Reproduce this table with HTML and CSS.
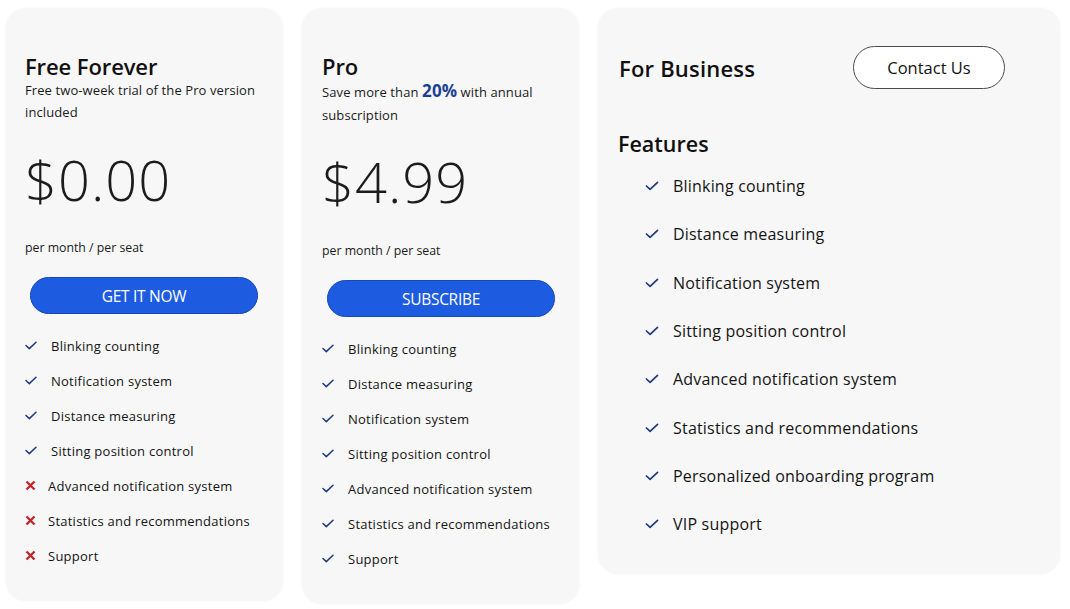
FILE: index.html
```html
<!DOCTYPE html>
<html>
<head>
<meta charset="utf-8">
<link rel="stylesheet" href="styles.css">
</head>
<body>
<div class="plans">
  <section class="card card-free">
    <h2 class="title">Free Forever</h2>
    <p class="sub">Free two-week trial of the Pro version included</p>
    <div class="price">$0.00</div>
    <div class="per">per month / per seat</div>
    <button class="cta">GET IT NOW</button>
    <ul class="feats">
      <li><svg class="ic" viewBox="0 0 12 9"><path d="M1 4.5 L4.3 7.6 L11 1.2"/></svg><span>Blinking counting</span></li>
      <li><svg class="ic" viewBox="0 0 12 9"><path d="M1 4.5 L4.3 7.6 L11 1.2"/></svg><span>Notification system</span></li>
      <li><svg class="ic" viewBox="0 0 12 9"><path d="M1 4.5 L4.3 7.6 L11 1.2"/></svg><span>Distance measuring</span></li>
      <li><svg class="ic" viewBox="0 0 12 9"><path d="M1 4.5 L4.3 7.6 L11 1.2"/></svg><span>Sitting position control</span></li>
      <li class="no"><svg class="x" viewBox="0 0 11 11"><path d="M1.5 1.5 L9.5 9.5 M9.5 1.5 L1.5 9.5"/></svg><span>Advanced notification system</span></li>
      <li class="no"><svg class="x" viewBox="0 0 11 11"><path d="M1.5 1.5 L9.5 9.5 M9.5 1.5 L1.5 9.5"/></svg><span>Statistics and recommendations</span></li>
      <li class="no"><svg class="x" viewBox="0 0 11 11"><path d="M1.5 1.5 L9.5 9.5 M9.5 1.5 L1.5 9.5"/></svg><span>Support</span></li>
    </ul>
  </section>

  <section class="card card-pro">
    <h2 class="title">Pro</h2>
    <p class="sub sub-pro">Save more than <strong class="hl">20%</strong> with annual<br>subscription</p>
    <div class="price">$4.99</div>
    <div class="per">per month / per seat</div>
    <button class="cta">SUBSCRIBE</button>
    <ul class="feats">
      <li><svg class="ic" viewBox="0 0 12 9"><path d="M1 4.5 L4.3 7.6 L11 1.2"/></svg><span>Blinking counting</span></li>
      <li><svg class="ic" viewBox="0 0 12 9"><path d="M1 4.5 L4.3 7.6 L11 1.2"/></svg><span>Distance measuring</span></li>
      <li><svg class="ic" viewBox="0 0 12 9"><path d="M1 4.5 L4.3 7.6 L11 1.2"/></svg><span>Notification system</span></li>
      <li><svg class="ic" viewBox="0 0 12 9"><path d="M1 4.5 L4.3 7.6 L11 1.2"/></svg><span>Sitting position control</span></li>
      <li><svg class="ic" viewBox="0 0 12 9"><path d="M1 4.5 L4.3 7.6 L11 1.2"/></svg><span>Advanced notification system</span></li>
      <li><svg class="ic" viewBox="0 0 12 9"><path d="M1 4.5 L4.3 7.6 L11 1.2"/></svg><span>Statistics and recommendations</span></li>
      <li><svg class="ic" viewBox="0 0 12 9"><path d="M1 4.5 L4.3 7.6 L11 1.2"/></svg><span>Support</span></li>
    </ul>
  </section>

  <section class="card card-biz">
    <div class="biz-head">
      <h2 class="title biz-title">For Business</h2>
      <button class="contact">Contact Us</button>
    </div>
    <h3 class="feat-title">Features</h3>
    <ul class="feats feats-biz">
      <li><svg class="ic" viewBox="0 0 12 9"><path d="M1 4.5 L4.3 7.6 L11 1.2"/></svg><span>Blinking counting</span></li>
      <li><svg class="ic" viewBox="0 0 12 9"><path d="M1 4.5 L4.3 7.6 L11 1.2"/></svg><span>Distance measuring</span></li>
      <li><svg class="ic" viewBox="0 0 12 9"><path d="M1 4.5 L4.3 7.6 L11 1.2"/></svg><span>Notification system</span></li>
      <li><svg class="ic" viewBox="0 0 12 9"><path d="M1 4.5 L4.3 7.6 L11 1.2"/></svg><span>Sitting position control</span></li>
      <li><svg class="ic" viewBox="0 0 12 9"><path d="M1 4.5 L4.3 7.6 L11 1.2"/></svg><span>Advanced notification system</span></li>
      <li><svg class="ic" viewBox="0 0 12 9"><path d="M1 4.5 L4.3 7.6 L11 1.2"/></svg><span>Statistics and recommendations</span></li>
      <li><svg class="ic" viewBox="0 0 12 9"><path d="M1 4.5 L4.3 7.6 L11 1.2"/></svg><span>Personalized onboarding program</span></li>
      <li><svg class="ic" viewBox="0 0 12 9"><path d="M1 4.5 L4.3 7.6 L11 1.2"/></svg><span>VIP support</span></li>
    </ul>
  </section>
</div>
</body>
</html>
```

FILE: styles.css
```css
* { box-sizing: border-box; }
html, body { margin: 0; padding: 0; background: #ffffff; }
body {
  font-family: "Open Sans", "Noto Sans", sans-serif;
  color: #151515;
  width: 1070px;
  height: 609px;
  overflow: hidden;
}
.plans {
  display: flex;
  align-items: flex-start;
  gap: 19px;
  padding: 8px 0 0 6px;
}
.card {
  background: #f7f7f7;
  border-radius: 20px;
  box-shadow: 0 0 3px rgba(0,0,0,0.04);
}
.card-free, .card-pro {
  width: 277px;
  padding: 45px 8px 28px 19px;
}
.card-pro { padding-left: 20px; }
.card-biz {
  width: 462px;
  padding: 38px 20px 26px 21px;
}
.title {
  margin: 0;
  font-size: 22px;
  line-height: 26px;
  font-weight: 600;
  letter-spacing: -0.1px;
  color: #111;
}
.sub {
  margin: 0;
  font-size: 13px;
  line-height: 22px;
  letter-spacing: 0.1px;
  color: #1a1a1a;
  padding-right: 10px;
}
.sub-pro {
  line-height: 23px;
  margin-top: 2px;
}
.hl {
  line-height: 18px;
  color: #1d3f95;
  font-size: 17px;
  font-weight: 700;
}
.price {
  margin-top: 21px;
  font-size: 56px;
  line-height: 70px;
  font-weight: 300;
  color: #1c1c1c;
  letter-spacing: 1px;
}
.card-pro .price { margin-top: 19px; }
.per {
  margin-top: 25px;
  font-size: 12.3px;
  line-height: 18px;
  color: #1a1a1a;
}
.card-pro .per { margin-top: 26px; }
.cta {
  display: block;
  margin: 20px 0 0 5px;
  width: 228px;
  height: 37px;
  border-radius: 19px;
  border: 1.5px solid #1746b8;
  background: #1d5be0;
  color: #fff;
  font-family: inherit;
  font-size: 15.5px;
  font-weight: 500;
  letter-spacing: -0.3px;
  padding: 0;
}
.feats {
  list-style: none;
  margin: 14px 0 0 0;
  padding: 0;
}
.feats li {
  display: flex;
  align-items: center;
  height: 35px;
  font-size: 13px;
  letter-spacing: 0.25px;
  color: #141414;
  white-space: nowrap;
}
.ic {
  width: 12px;
  height: 9px;
  margin-right: 14px;
  fill: none;
  stroke: #1d3a80;
  stroke-width: 1.5;
  stroke-linecap: round;
  stroke-linejoin: round;
  flex: none;
}
.x {
  width: 11px;
  height: 11px;
  margin-right: 12px;
  fill: none;
  stroke: #c4262e;
  stroke-width: 2.4;
  flex: none;
}
.biz-head {
  display: flex;
  align-items: center;
}
.biz-title {
  width: 234px;
  letter-spacing: 0.2px;
}
.contact {
  width: 152px;
  height: 43px;
  border-radius: 22px;
  border: 1px solid #4a4a4a;
  background: #ffffff;
  font-family: inherit;
  font-size: 16.5px;
  color: #111;
  padding: 0;
}
.feat-title {
  margin: 41px 0 0 -1px;
  font-size: 21.5px;
  line-height: 28px;
  font-weight: 600;
  color: #111;
}
.feats-biz {
  margin-top: 4px;
  padding-left: 26px;
}
.feats-biz li {
  height: 48.3px;
  font-size: 16px;
  letter-spacing: 0.2px;
}
.feats-biz .ic {
  width: 14px;
  height: 10px;
  margin-right: 14px;
}
```
